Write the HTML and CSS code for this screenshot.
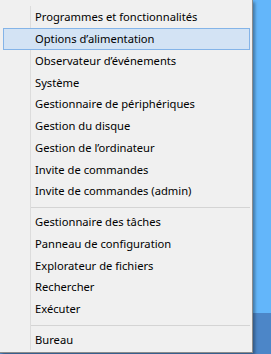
FILE: index.html
```html
<!DOCTYPE html>
<html lang="fr">
<head>
    <meta charset="UTF-8">
    <meta name="viewport" content="width=device-width, initial-scale=1.0">
    <title>Menu Win+X</title>
    <link rel="stylesheet" href="styles.css">
</head>
<body>
    <div class="menu">
        <div class="item">Programmes et fonctionnalités</div>
        <div class="item active">Options d’alimentation</div>
        <div class="item">Observateur d’événements</div>
        <div class="item">Système</div>
        <div class="item">Gestionnaire de périphériques</div>
        <div class="item">Gestion du disque</div>
        <div class="item">Gestion de l’ordinateur</div>
        <div class="item">Invite de commandes</div>
        <div class="item">Invite de commandes (admin)</div>
        <div class="separator"></div>
        <div class="item">Gestionnaire des tâches</div>
        <div class="item">Panneau de configuration</div>
        <div class="item">Explorateur de fichiers</div>
        <div class="item">Rechercher</div>
        <div class="item">Exécuter</div>
        <div class="separator"></div>
        <div class="item">Bureau</div>
    </div>
</body>
</html>
```

FILE: styles.css
```css
body {
    margin: 0;
    height: 354px;
    overflow: hidden;
    background: linear-gradient(to bottom, #63b6fa 0, #63b6fa 313px, #4c86c8 313px);
    font-family: "Noto Sans", sans-serif;
}

.menu {
    width: 252px;
    padding: 6px 0 2px;
    background-color: #f0f0f0;
    background-image: linear-gradient(#dcdcdc, #dcdcdc);
    background-repeat: no-repeat;
    background-position: 30px 6px;
    background-size: 1px calc(100% - 8px);
    border-right: 1px solid #8c8c8c;
    border-bottom: 1px solid #8c8c8c;
    box-shadow: 2px 2px 3px rgba(0, 0, 0, 0.35);
}

.item {
    height: 19.75px;
    margin: 0 2px 0 3px;
    padding-left: 31px;
    border: 1px solid transparent;
    display: flex;
    align-items: center;
    font-size: 11.2px;
    color: #000;
    white-space: nowrap;
}

.item.active {
    background-color: #d3e3f4;
    border-color: #84b4e8;
}

.separator {
    height: 1px;
    margin: 5px 2px 3px 31px;
    background-color: #d4d4d4;
}
```
